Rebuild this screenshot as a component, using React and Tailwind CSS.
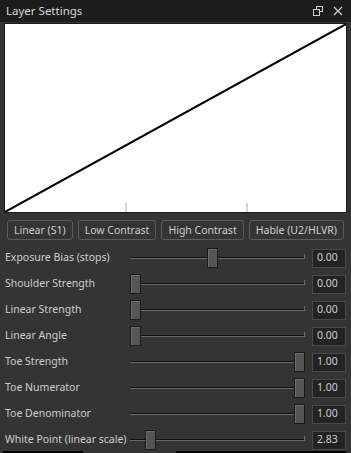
import React from 'react';

const rows = [
  { label: 'Exposure Bias (stops)', pos: 0.47, value: '0.00' },
  { label: 'Shoulder Strength', pos: 0, value: '0.00' },
  { label: 'Linear Strength', pos: 0, value: '0.00' },
  { label: 'Linear Angle', pos: 0, value: '0.00' },
  { label: 'Toe Strength', pos: 1, value: '1.00' },
  { label: 'Toe Numerator', pos: 1, value: '1.00' },
  { label: 'Toe Denominator', pos: 1, value: '1.00' },
  { label: 'White Point (linear scale)', pos: 0.09, value: '2.83' },
];

const presets = ['Linear (S1)', 'Low Contrast', 'High Contrast', 'Hable (U2/HLVR)'];

// groove + handle, handle left offset comes from data
const Slider = ({ pos }) => (
  <div className="relative flex-1 h-[22px] flex items-center">
    <div className="w-full flex items-center">
      <div className="flex-1 flex flex-col">
        <div className="h-px bg-[#111111]" />
        <div className="h-px bg-[#6a6a6a]" />
      </div>
      <div className="w-px h-[5px] bg-[#6a6a6a] -mt-[3px]" />
    </div>
    <div
      className="absolute top-[1px] w-[11px] h-[20px] bg-[#555555] border border-[#1a1a1a] shadow-[inset_1px_1px_0_#6e6e6e]"
      style={{ left: `calc(${pos * 100}% - ${pos * 11}px)` }}
    />
  </div>
);

export default function App() {
  return (
    <div
      className="w-[351px] h-[453px] bg-[#343434] flex flex-col overflow-hidden text-[#cdcdcd]"
      style={{ fontFamily: '"Noto Sans", "Open Sans", sans-serif' }}
    >
      {/* Title bar */}
      <div className="h-[22px] bg-[#1c1c1c] flex items-center justify-between pl-[6px] pr-[8px] shrink-0">
        <span className="text-[11.5px] leading-none text-[#d8d8d8]">Layer Settings</span>
        <div className="flex items-center gap-[10px]">
          <svg width="10" height="10" viewBox="0 0 10 10" fill="none" stroke="#cfcfcf" strokeWidth="1">
            <rect x="3.5" y="0.5" width="6" height="5" />
            <rect x="0.5" y="3.5" width="6" height="6" fill="#1c1c1c" />
          </svg>
          <svg width="10" height="10" viewBox="0 0 10 10" stroke="#cfcfcf" strokeWidth="1.2">
            <path d="M1 1L9 9M9 1L1 9" />
          </svg>
        </div>
      </div>

      {/* Curve graph */}
      <div className="px-[4px] pt-px shrink-0">
        <div className="h-[190px] bg-white border border-[#1a1a1a]">
          <svg width="100%" height="100%" viewBox="0 0 341 188" preserveAspectRatio="none">
            <line x1="121" y1="188" x2="121" y2="179" stroke="#aaaaaa" strokeWidth="1" />
            <line x1="242" y1="188" x2="242" y2="179" stroke="#aaaaaa" strokeWidth="1" />
            <line x1="0" y1="188" x2="341" y2="0" stroke="#000000" strokeWidth="2" />
          </svg>
        </div>
      </div>

      {/* Presets */}
      <div className="flex justify-between px-[7px] mt-[7px] shrink-0">
        {presets.map((p) => (
          <button
            key={p}
            className="h-[20px] px-[6px] rounded-[3px] border border-[#5c5c5c] bg-[#343434] text-[10.5px] leading-none text-[#cdcdcd]"
          >
            {p}
          </button>
        ))}
      </div>

      {/* Parameter rows */}
      <div className="flex flex-col mt-[7px] pl-[5px] pr-[5px] gap-[4px] shrink-0">
        {rows.map((r) => (
          <div key={r.label} className="flex items-center h-[22px] shrink-0">
            <div className="w-[125px] text-[10.5px] whitespace-nowrap">{r.label}</div>
            <Slider pos={r.pos} />
            <div className="w-[34px] h-[19px] ml-[7px] bg-[#232323] border border-[#4a4a4a] text-[10.5px] flex items-center pl-[4px]">
              {r.value}
            </div>
          </div>
        ))}
      </div>

      <div className="flex h-[2px] shrink-0">
        <div className="w-[80px] bg-black ml-[3px]" />
        <div className="flex-1 ml-[93px] mr-[5px] bg-black" />
      </div>
    </div>
  );
}
